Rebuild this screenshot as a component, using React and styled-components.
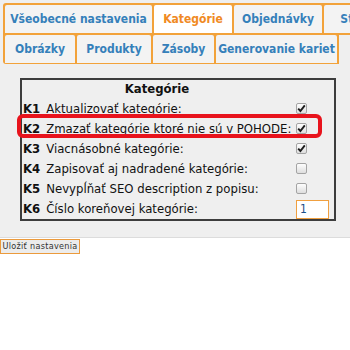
import React from "react";
import styled, { createGlobalStyle } from "styled-components";

const orange = "#f2a23a";

const tabs = [
  [
    { label: "Všeobecné nastavenia", width: 147 },
    { label: "Kategórie", width: 78, active: true },
    { label: "Objednávky", width: 88 },
    { label: "Stav", width: 60 },
  ],
  [
    { label: "Obrázky", width: 70 },
    { label: "Produkty", width: 74 },
    { label: "Zásoby", width: 61 },
    { label: "Generovanie kariet", width: 121 },
  ],
];

const rows = [
  { key: "K1", text: "Aktualizovať kategórie:", type: "check", checked: true },
  { key: "K2", text: "Zmazať kategórie ktoré nie sú v POHODE:", type: "check", checked: true },
  { key: "K3", text: "Viacnásobné kategórie:", type: "check", checked: true },
  { key: "K4", text: "Zapisovať aj nadradené kategórie:", type: "check", checked: false },
  { key: "K5", text: "Nevypĺňať SEO description z popisu:", type: "check", checked: false },
  { key: "K6", text: "Číslo koreňovej kategórie:", type: "input", value: "1" },
];

const GlobalStyle = createGlobalStyle`
  html, body {
    margin: 0;
    padding: 0;
    background: #fff;
    overflow: hidden;
  }
  body {
    font-family: "DejaVu Sans Condensed", "DejaVu Sans", sans-serif;
  }
`;

const Page = styled.div`
  width: 350px;
  height: 350px;
  overflow: hidden;
`;

const Panel = styled.div`
  background: #efefef;
  border-bottom: 1px solid #dcdcdc;
  padding: 3px 0 16px 0;
`;

const TabStrip = styled.div`
  margin-left: 3px;
  width: 420px;
  background: ${orange};
  padding: 2px 2px 1px 2px;
  display: flex;
  flex-direction: column;
  gap: 2px;
  border-radius: 3px 0 0 3px;
`;

const TabRow = styled.div`
  display: flex;
  gap: 2px;
`;

const Tab = styled.div`
  box-sizing: border-box;
  height: 28px;
  flex: 0 0 auto;
  display: flex;
  align-items: center;
  justify-content: center;
  background: ${(p) => (p.$active ? "#ffffff" : "#f3f3f3")};
  color: ${(p) => (p.$active ? "#f08a24" : "#3580ba")};
  font-weight: bold;
  font-size: 12px;
  white-space: nowrap;
  border-radius: 2px 2px 0 0;
`;

const Filler = styled.div`
  flex: 1;
  background: #efefef;
  margin-bottom: -1px;
`;

const Content = styled.div`
  padding: 14px 14px 0 20px;
`;

const TableWrap = styled.div`
  position: relative;
  width: 316px;
`;

const Table = styled.div`
  box-sizing: border-box;
  width: 316px;
  border: 2px solid #3d3d3d;
  padding: 0 0 1px 0;
  font-size: 13px;
  color: #111;
`;

const Heading = styled.div`
  width: 270px;
  text-align: center;
  font-weight: bold;
  height: 18px;
  line-height: 17px;
`;

const Row = styled.div`
  display: flex;
  align-items: center;
  height: 20px;
`;

const Label = styled.div`
  flex: 0 0 273px;
  padding-left: 1px;
  white-space: nowrap;
  b {
    margin-right: 6px;
  }
`;

const Box = styled.span`
  box-sizing: border-box;
  display: inline-flex;
  align-items: center;
  justify-content: center;
  width: 11px;
  height: 11px;
  border: 1px solid #a4a4a4;
  border-radius: 2px;
  background: linear-gradient(#fdfdfd, #dedede);
`;

const NumInput = styled.div`
  box-sizing: border-box;
  width: 33px;
  height: 19px;
  margin-top: 2px;
  border: 1px solid #f0a040;
  background: #fff;
  font-size: 12px;
  line-height: 17px;
  padding-left: 3px;
  color: #1a4f8a;
`;

const Marker = styled.div`
  position: absolute;
  left: -3px;
  top: 36px;
  width: 305px;
  height: 24px;
  box-sizing: border-box;
  border: 4px solid #e8131c;
  border-radius: 6px;
  pointer-events: none;
`;

const SaveButton = styled.div`
  box-sizing: border-box;
  width: 80px;
  height: 15px;
  margin-top: 1px;
  border: 1px solid #eb9a3c;
  background: #ececec;
  font-family: "DejaVu Sans Condensed", "DejaVu Sans", sans-serif;
  font-size: 9px;
  line-height: 13px;
  text-align: center;
  letter-spacing: 0.3px;
  color: #333;
  white-space: nowrap;
`;

function Check({ checked }) {
  return (
    <Box>
      {checked && (
        <svg width="9" height="9" viewBox="0 0 9 9">
          <path d="M1.2 4.6 L3.4 7 L7.8 1.4" fill="none" stroke="#1c1c1c" strokeWidth="1.9" />
        </svg>
      )}
    </Box>
  );
}

export default function App() {
  return (
    <Page>
      <GlobalStyle />
      <Panel>
        <TabStrip>
          {tabs.map((row, i) => (
            <TabRow key={i}>
              {row.map((t) => (
                <Tab key={t.label} $active={t.active} style={{ width: t.width }}>
                  {t.label}
                </Tab>
              ))}
              {i === 1 && <Filler />}
            </TabRow>
          ))}
        </TabStrip>
        <Content>
          <TableWrap>
            <Table>
              <Heading>Kategórie</Heading>
              {rows.map((r) => (
                <Row key={r.key}>
                  <Label>
                    <b>{r.key}</b>
                    {r.text}
                  </Label>
                  {r.type === "check" ? <Check checked={r.checked} /> : <NumInput>{r.value}</NumInput>}
                </Row>
              ))}
            </Table>
            <Marker />
          </TableWrap>
        </Content>
      </Panel>
      <SaveButton>Uložiť nastavenia</SaveButton>
    </Page>
  );
}
